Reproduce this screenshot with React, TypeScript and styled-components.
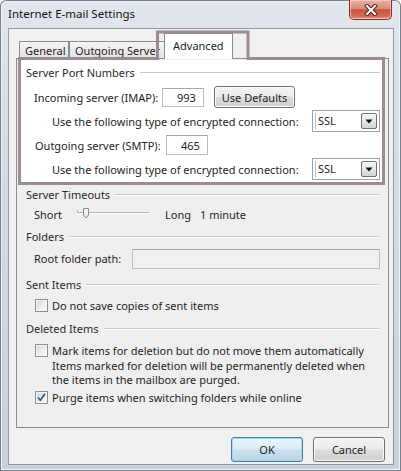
import React from "react";
import styled, { createGlobalStyle } from "styled-components";

const GlobalStyle = createGlobalStyle`
  html, body { margin: 0; padding: 0; background: #ffffff; }
  body { font-family: "Noto Sans", "Open Sans", sans-serif; font-size: 11px; color: #1e1e1e; }
  * { box-sizing: border-box; }
`;

const Window = styled.div`
  position: relative;
  width: 401px;
  height: 471px;
  display: flex;
  flex-direction: column;
  overflow: hidden;
  border-radius: 6px 6px 0 0;
  background: linear-gradient(180deg, #e2e7ed 0%, #d7dee6 20%, #c8d1dc 100%);
  box-shadow: inset 0 0 0 1px #76838f, inset 0 0 0 2px #eef2f6;
`;

const TitleBar = styled.div`
  height: 28px;
  flex: none;
  display: flex;
  align-items: flex-start;
  justify-content: space-between;
  padding-left: 8px;
`;

const Title = styled.div`
  height: 28px;
  line-height: 28px;
  font-size: 11.5px;
  color: #111;
`;

const CloseButton = styled.div`
  width: 43px;
  height: 20px;
  margin-right: 9px;
  display: flex;
  align-items: center;
  justify-content: center;
  border: 1px solid #7b3426;
  border-top: none;
  border-radius: 0 0 5px 5px;
  background: linear-gradient(180deg, #eab1a4 0%, #d98a78 45%, #c9513b 52%, #d26b52 85%, #e3a08c 100%);
  box-shadow: inset 0 0 0 1px rgba(255, 220, 210, 0.55);
`;

const Client = styled.div`
  flex: 1;
  margin: 0 7px 6px 8px;
  border: 1px solid #8e9bab;
  background: #f0f0f0;
  padding: 4px 4px 0 7px;
  display: flex;
  flex-direction: column;
`;

const TabStrip = styled.div`
  height: 26px;
  display: flex;
  align-items: flex-end;
  padding-left: 3px;
  margin-bottom: -1px;
  position: relative;
  z-index: 1;
`;

const Tab = styled.div<{ $active?: boolean; $w: number }>`
  width: ${(p) => p.$w}px;
  height: ${(p) => (p.$active ? 26 : 18)}px;
  margin-left: ${(p) => (p.$active ? -2 : 0)}px;
  border: 1px solid #898c95;
  border-bottom: ${(p) => (p.$active ? "none" : "1px solid #898c95")};
  background: ${(p) =>
    p.$active ? "#ffffff" : "linear-gradient(180deg, #f4f4f4 0%, #ececec 50%, #e2e2e2 100%)"};
  display: flex;
  align-items: ${(p) => (p.$active ? "flex-start" : "center")};
  padding: ${(p) => (p.$active ? "4px 0 0 8px" : "0 0 0 5px")};
  white-space: nowrap;
  overflow: hidden;
  color: #1e1e1e;
  position: relative;
  z-index: ${(p) => (p.$active ? 2 : 1)};
  & + & {
    border-left: ${(p) => (p.$active ? "1px solid #898c95" : "none")};
  }
`;

const Panel = styled.div`
  height: 370px;
  border: 1px solid #898c95;
  background: #efefef;
  display: flex;
  flex-direction: column;
`;

const HighlightArea = styled.div`
  background: #ffffff;
  margin: 1px 4px 0 4px;
  padding: 4px 4px 0 5px;
  height: 124px;
  display: flex;
  flex-direction: column;
`;

const Section = styled.div`
  padding: 0 8px 0 9px;
  display: flex;
  flex-direction: column;
`;

const GroupHeader = styled.div<{ $mt?: number }>`
  height: 16px;
  margin-top: ${(p) => p.$mt ?? 0}px;
  display: flex;
  align-items: center;
  color: #2a2a2a;
  white-space: nowrap;
  &::after {
    content: "";
    flex: 1;
    height: 1px;
    margin-left: 5px;
    background: #c9c9c9;
    box-shadow: 0 1px 0 #ffffff;
  }
`;

const Row = styled.div<{ $mt?: number; $h: number; $indent: number }>`
  height: ${(p) => p.$h}px;
  margin-top: ${(p) => p.$mt ?? 0}px;
  padding-left: ${(p) => p.$indent}px;
  display: flex;
  align-items: center;
  white-space: nowrap;
`;

const Label = styled.span<{ $w?: number }>`
  flex: none;
  width: ${(p) => (p.$w ? `${p.$w}px` : "auto")};
`;

const TextBox = styled.div<{ $w?: number; $h: number; $disabled?: boolean }>`
  width: ${(p) => (p.$w ? `${p.$w}px` : "auto")};
  flex: ${(p) => (p.$w ? "none" : "1")};
  height: ${(p) => p.$h}px;
  border: 1px solid #b8bec6;
  border-top-color: #a2a8b0;
  background: ${(p) => (p.$disabled ? "#f0f0f0" : "#ffffff")};
  display: flex;
  align-items: center;
  padding-left: 14px;
`;

const PushButton = styled.div<{ $w: number; $h: number; $default?: boolean; $ml?: number }>`
  width: ${(p) => p.$w}px;
  height: ${(p) => p.$h}px;
  margin-left: ${(p) => p.$ml ?? 0}px;
  flex: none;
  display: flex;
  align-items: center;
  justify-content: center;
  border-radius: 3px;
  border: 1px solid ${(p) => (p.$default ? "#3c7fb1" : "#707070")};
  background: ${(p) =>
    p.$default
      ? "linear-gradient(180deg, #eaf4fa 0%, #dcebf4 48%, #c9dfeb 52%, #bcd6e6 100%)"
      : "linear-gradient(180deg, #f4f4f4 0%, #ebebeb 48%, #dddddd 52%, #cfcfcf 100%)"};
  box-shadow: inset 0 0 0 1px ${(p) => (p.$default ? "#a6d3ee" : "#fbfbfb")};
  color: #1e1e1e;
`;

const Select = styled.div`
  margin-left: auto;
  width: 68px;
  height: 22px;
  flex: none;
  border: 1px solid #9ea3a9;
  background: #ffffff;
  display: flex;
  align-items: center;
  padding: 0 2px 0 2px;
`;

const SelectText = styled.span`
  flex: 1;
  border-left: 1px solid #9fc6e8;
  padding-left: 2px;
  line-height: 16px;
`;

const DropButton = styled.div`
  width: 16px;
  height: 16px;
  border: 1px solid #707070;
  border-radius: 2px;
  background: linear-gradient(180deg, #f4f4f4 0%, #e6e6e6 50%, #d4d4d4 100%);
  display: flex;
  align-items: center;
  justify-content: center;
`;

const CheckBox = styled.div`
  width: 13px;
  height: 13px;
  flex: none;
  margin-right: 4px;
  border: 1px solid #8e8f8f;
  background: linear-gradient(135deg, #d6d6d6 0%, #efefef 60%, #fafafa 100%);
  box-shadow: inset 0 0 0 1px #f4f4f4;
  display: flex;
  align-items: center;
  justify-content: center;
`;

const Desc = styled.div`
  margin-top: 0px;
  padding-left: 26px;
  display: flex;
  flex-direction: column;
  white-space: nowrap;
`;

const DescLine = styled.div`
  height: 14px;
  line-height: 14px;
`;

const Footer = styled.div`
  display: flex;
  justify-content: flex-end;
  gap: 10px;
  padding: 9px 4px 0 0;
`;

const Overlay = styled.svg`
  position: absolute;
  left: 0;
  top: 0;
  pointer-events: none;
  z-index: 5;
`;

const Gap = styled.span<{ $w: number }>`
  display: inline-block;
  width: ${(p) => p.$w}px;
  flex: none;
`;

const Check = ({ checked }: { checked?: boolean }) => (
  <CheckBox>
    {checked && (
      <svg width="11" height="11" viewBox="0 0 11 11">
        <path d="M2 5.5 L4.3 8.3 L9 1.8" fill="none" stroke="#3f5a9b" strokeWidth="1.8" strokeLinejoin="round" />
      </svg>
    )}
  </CheckBox>
);

const Combo = () => (
  <Select>
    <SelectText>SSL</SelectText>
    <DropButton>
      <svg width="8" height="5" viewBox="0 0 8 5">
        <path d="M0.5 0.5 H7.5 L4 4.5 Z" fill="#111" />
      </svg>
    </DropButton>
  </Select>
);

const Slider = () => (
  <svg width="72" height="14" viewBox="0 0 72 14" style={{ flex: "none" }}>
    <line x1="0" y1="5.5" x2="72" y2="5.5" stroke="#b4b4b4" strokeWidth="1" />
    <line x1="0" y1="6.5" x2="72" y2="6.5" stroke="#ffffff" strokeWidth="1" />
    <line x1="0.5" y1="3" x2="0.5" y2="6" stroke="#b4b4b4" strokeWidth="1" />
    <path d="M6.5 1.5 H11.5 V8 L9 11 L6.5 8 Z" fill="#f2f2f2" stroke="#8a8a8a" strokeWidth="1" />
  </svg>
);

export default function App() {
  return (
    <>
      <GlobalStyle />
      <Window>
        <TitleBar>
          <Title>Internet E-mail Settings</Title>
          <CloseButton>
            <svg width="14" height="12" viewBox="0 0 14 12">
              <path d="M3 2 L11 10 M11 2 L3 10" stroke="#4a1a12" strokeWidth="4" strokeLinecap="square" />
              <path d="M3 2 L11 10 M11 2 L3 10" stroke="#ffffff" strokeWidth="2.2" strokeLinecap="square" />
            </svg>
          </CloseButton>
        </TitleBar>
        <Client>
          <TabStrip>
            <Tab $w={50}>General</Tab>
            <Tab $w={97}>Outgoing Server</Tab>
            <Tab $w={69} $active>Advanced</Tab>
          </TabStrip>
          <Panel>
            <HighlightArea>
              <GroupHeader>Server Port Numbers</GroupHeader>
              <Row $mt={6} $h={22} $indent={8}>
                <Label $w={128}>Incoming server (IMAP):</Label>
                <TextBox $w={42} $h={19}>993</TextBox>
                <PushButton $w={81} $h={22} $ml={10}>Use Defaults</PushButton>
              </Row>
              <Row $mt={2} $h={22} $indent={26}>
                <Label>Use the following type of encrypted connection:</Label>
                <Combo />
              </Row>
              <Row $mt={2} $h={22} $indent={9}>
                <Label $w={131}>Outgoing server (SMTP):</Label>
                <TextBox $w={42} $h={20}>465</TextBox>
              </Row>
              <Row $mt={2} $h={22} $indent={26}>
                <Label>Use the following type of encrypted connection:</Label>
                <Combo />
              </Row>
            </HighlightArea>
            <Section>
              <GroupHeader $mt={2}>Server Timeouts</GroupHeader>
              <Row $mt={2} $h={20} $indent={8}>
                <Label $w={43}>Short</Label>
                <Slider />
                <Gap $w={16} />
                <Label $w={35}>Long</Label>
                <Label>1 minute</Label>
              </Row>
              <GroupHeader $mt={4}>Folders</GroupHeader>
              <Row $mt={4} $h={21} $indent={8}>
                <Label $w={98}>Root folder path:</Label>
                <TextBox $h={20} $disabled />
              </Row>
              <GroupHeader $mt={7}>Sent Items</GroupHeader>
              <Row $mt={4} $h={18} $indent={9}>
                <Check />
                <Label>Do not save copies of sent items</Label>
              </Row>
              <GroupHeader $mt={6}>Deleted Items</GroupHeader>
              <Row $mt={5} $h={18} $indent={9}>
                <Check />
                <Label>Mark items for deletion but do not move them automatically</Label>
              </Row>
              <Desc>
                <DescLine>Items marked for deletion will be permanently deleted when</DescLine>
                <DescLine>the items in the mailbox are purged.</DescLine>
              </Desc>
              <Row $mt={1} $h={18} $indent={9}>
                <Check checked />
                <Label>Purge items when switching folders while online</Label>
              </Row>
            </Section>
          </Panel>
          <Footer>
            <PushButton $w={72} $h={25} $default>OK</PushButton>
            <PushButton $w={72} $h={25}>Cancel</PushButton>
          </Footer>
        </Client>
        <Overlay width="401" height="471" viewBox="0 0 401 471">
          <path
            d="M19.5 58.5 H157.5 V32 H248 V58.5 H383.5 V183.5 H19.5 Z"
            fill="none"
            stroke="#9c8b96"
            strokeWidth="3"
          />
        </Overlay>
      </Window>
    </>
  );
}
